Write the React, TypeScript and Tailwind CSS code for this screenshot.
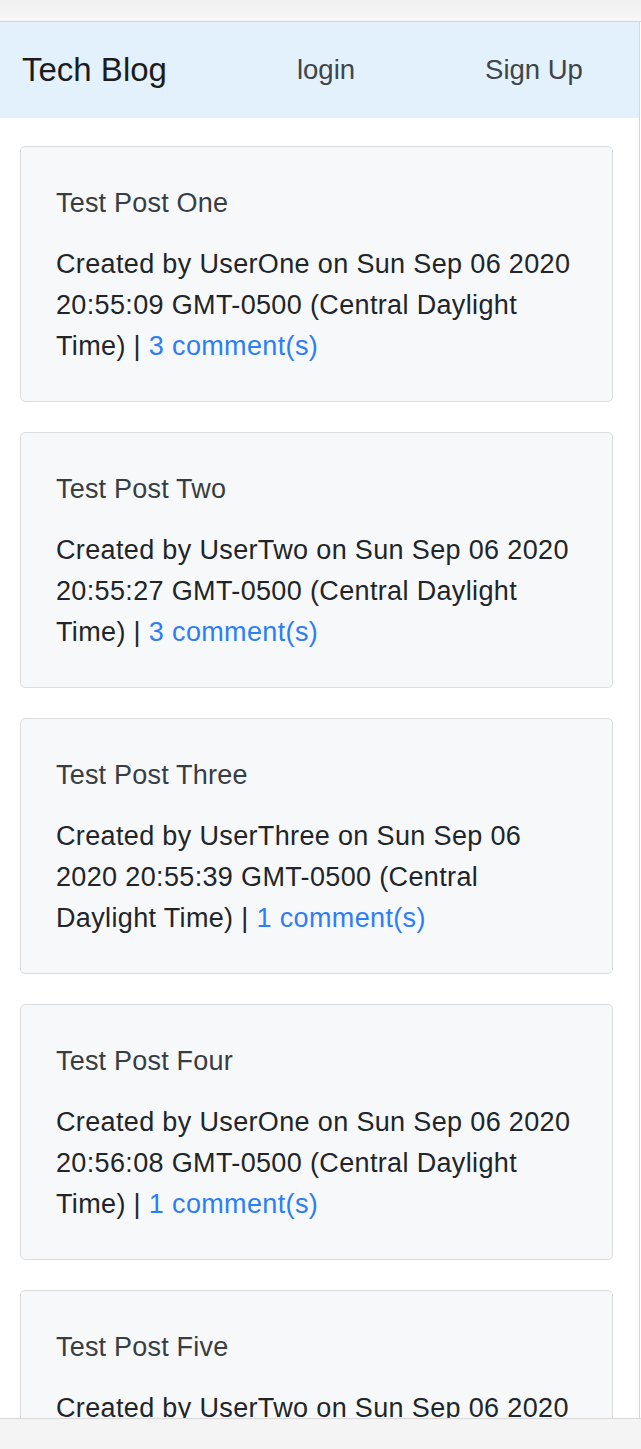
const posts = [
  {
    title: "Test Post One",
    author: "UserOne",
    date: "Sun Sep 06 2020 20:55:09 GMT-0500 (Central Daylight Time)",
    comments: 3,
  },
  {
    title: "Test Post Two",
    author: "UserTwo",
    date: "Sun Sep 06 2020 20:55:27 GMT-0500 (Central Daylight Time)",
    comments: 3,
  },
  {
    title: "Test Post Three",
    author: "UserThree",
    date: "Sun Sep 06 2020 20:55:39 GMT-0500 (Central Daylight Time)",
    comments: 1,
  },
  {
    title: "Test Post Four",
    author: "UserOne",
    date: "Sun Sep 06 2020 20:56:08 GMT-0500 (Central Daylight Time)",
    comments: 1,
  },
  {
    title: "Test Post Five",
    author: "UserTwo",
    date: "Sun Sep 06 2020 20:56:30 GMT-0500 (Central Daylight Time)",
    comments: 2,
  },
];

function Navbar() {
  return (
    <nav className="flex items-center h-[96px] bg-[#e3f1fc] px-[22px] gap-[130px]">
      <a className="text-[33px] text-[#1c1c1c] leading-none pb-[2px]">Tech Blog</a>
      <a className="text-[27.5px] text-[#3f4449] leading-none">login</a>
      <a className="text-[27.5px] text-[#3f4449] leading-none">Sign Up</a>
    </nav>
  );
}

function PostCard({ post }: { post: (typeof posts)[number] }) {
  return (
    <div className="w-[593px] ml-[20px] bg-[#f7f8fa] border border-[#dadcde] rounded-[5px] pt-[36px] pb-[34px] px-[35px] shrink-0">
      <div className="text-[27px] leading-[41px] tracking-[0.2px] text-[#383d42] mb-[20px]">{post.title}</div>
      <p className="text-[27px] leading-[41px] tracking-[0.35px] text-[#212529]">
        Created by {post.author} on {post.date} |{" "}
        <a className="text-[#2b7ef7]">{post.comments} comment(s)</a>
      </p>
    </div>
  );
}

export default function App() {
  return (
    <div className="h-[1449px] w-[641px] flex flex-col overflow-hidden bg-white font-['Liberation_Sans',Arial,sans-serif]">
      <div className="h-[22px] shrink-0 bg-gradient-to-b from-[#f1f1f1] to-[#f7f7f7] border-b border-[#d3d3d3]"></div>
      <div className="flex-1 overflow-hidden w-[640px] border-r border-[#d6d6d6]">
        <Navbar />
        <div className="flex flex-col gap-[30px] pt-[28px]">
          {posts.map((post) => (
            <PostCard key={post.title} post={post} />
          ))}
        </div>
      </div>
      <div className="h-[31px] shrink-0 bg-[#f4f4f4] border-t border-[#d9d9d9]"></div>
    </div>
  );
}
